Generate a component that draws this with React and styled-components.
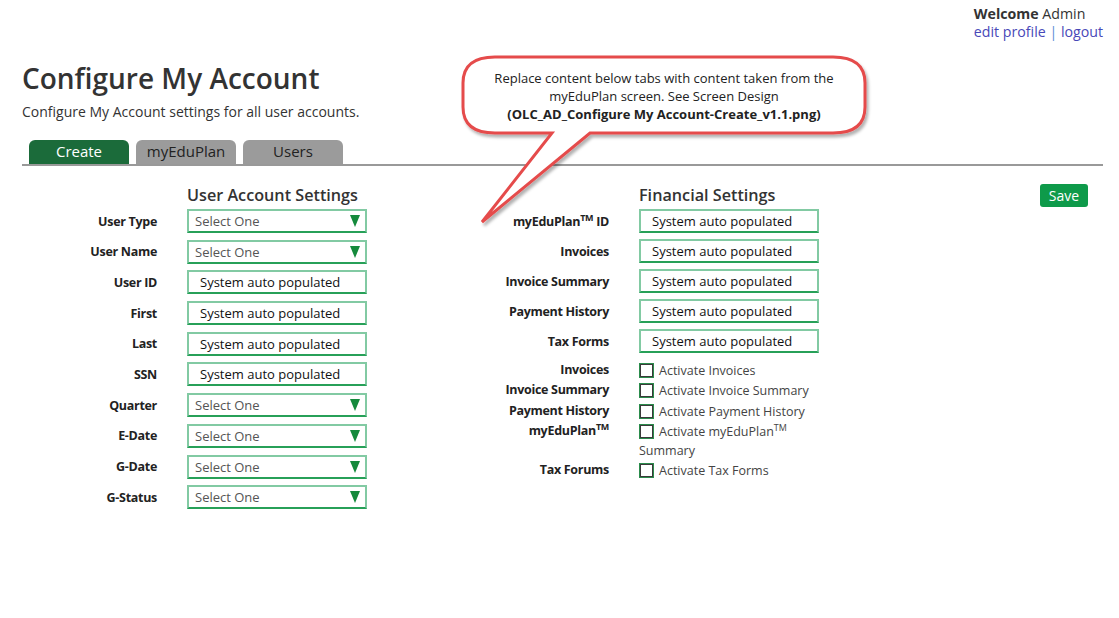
import React from 'react'
import styled, { createGlobalStyle } from 'styled-components'

const GlobalStyle = createGlobalStyle`
	html, body {
		margin: 0;
		padding: 0;
		background: #fff;
	}
	body {
		font-family: 'Open Sans', 'Liberation Sans', sans-serif;
		color: #333;
	}
`

const userRows = [
	{ label: 'User Type', select: true },
	{ label: 'User Name', select: true },
	{ label: 'User ID' },
	{ label: 'First' },
	{ label: 'Last' },
	{ label: 'SSN' },
	{ label: 'Quarter', select: true },
	{ label: 'E-Date', select: true },
	{ label: 'G-Date', select: true },
	{ label: 'G-Status', select: true },
]

const financeRows = [
	{ label: <>myEduPlan<sup>TM</sup> ID</> },
	{ label: 'Invoices' },
	{ label: 'Invoice Summary' },
	{ label: 'Payment History' },
	{ label: 'Tax Forms' },
]

const checkRows = [
	{ label: 'Invoices', text: 'Activate Invoices' },
	{ label: 'Invoice Summary', text: 'Activate Invoice Summary' },
	{ label: 'Payment History', text: 'Activate Payment History' },
	{ label: <>myEduPlan<sup>TM</sup></>, text: <>Activate myEduPlan<sup>TM</sup> Summary</> },
	{ label: 'Tax Forums', text: 'Activate Tax Forms' },
]

export default function App() {
	return (
		<Page>
			<GlobalStyle />
			<TopBar>
				<Welcome>
					<div><b>Welcome</b> Admin</div>
					<div>
						<Link href="#">edit profile</Link> <Pipe>|</Pipe> <Link href="#">logout</Link>
					</div>
				</Welcome>
			</TopBar>

			<Header>
				<Title>Configure My Account</Title>
				<Subtitle>Configure My Account settings for all user accounts.</Subtitle>
			</Header>

			<Tabs>
				<Tab active>Create</Tab>
				<Tab>myEduPlan</Tab>
				<Tab>Users</Tab>
			</Tabs>

			<FormArea>
				<Group labelWidth={135}>
					<Heading>User Account Settings</Heading>
					<Rows gap={6.7}>
						{userRows.map(r => (
							<Row key={r.label}>
								<Label>{r.label}</Label>
								{r.select ? (
									<Select>
										<span>Select One</span>
										<Arrow />
									</Select>
								) : (
									<Field>System auto populated</Field>
								)}
							</Row>
						))}
					</Rows>
				</Group>

				<Group labelWidth={150} style={{ marginLeft: 92 }}>
					<Heading>Financial Settings</Heading>
					<Rows gap={6}>
						{financeRows.map((r, i) => (
							<Row key={i}>
								<Label>{r.label}</Label>
								<Field>System auto populated</Field>
							</Row>
						))}
					</Rows>
					<Checks>
						{checkRows.map((r, i) => (
							<CheckRow key={i}>
								<Label>{r.label}</Label>
								<CheckText>
									<Box />
									{r.text}
								</CheckText>
							</CheckRow>
						))}
					</Checks>
				</Group>

				<SaveButton>Save</SaveButton>
			</FormArea>

			<Callout>
				<svg width="430" height="180" viewBox="0 0 430 180">
					<defs>
						<filter id="sh" x="-10%" y="-10%" width="120%" height="130%">
							<feDropShadow dx="2" dy="3" stdDeviation="1.5" floodColor="#000" floodOpacity="0.3" />
						</filter>
					</defs>
					<path
						d="M36 2 H374 Q406 2 406 28 V52 Q406 78 374 78 H131 L23 167 L93 78 H36 Q4 78 4 52 V28 Q4 2 36 2 Z"
						fill="#fff"
						stroke="#e54b4b"
						strokeWidth="3"
						strokeLinejoin="miter"
						filter="url(#sh)"
					/>
				</svg>
				<CalloutText>
					Replace content below tabs with content taken from the
					<br />
					myEduPlan screen. See Screen Design
					<br />
					<b>(OLC_AD_Configure My Account-Create_v1.1.png)</b>
				</CalloutText>
			</Callout>
		</Page>
	)
}

const Page = styled.div`
	position: relative;
	width: 1119px;
	height: 618px;
	overflow: hidden;
	padding: 0 16px 0 22px;
	box-sizing: border-box;
`

const TopBar = styled.div`
	display: flex;
	justify-content: flex-end;
	padding-top: 5px;
`

const Welcome = styled.div`
	font-size: 14.2px;
	line-height: 18px;
	color: #333;
	white-space: nowrap;
	b {
		font-weight: 700;
	}
`

const Link = styled.a`
	color: #4848b8;
	text-decoration: none;
`

const Pipe = styled.span`
	color: #5b8ad6;
`

const Header = styled.div`
	margin-top: 19px;
`

const Title = styled.h1`
	margin: 0;
	font-size: 28px;
	font-weight: 600;
	line-height: 36px;
	color: #333;
	letter-spacing: 0;
`

const Subtitle = styled.p`
	margin: 6px 0 0;
	font-size: 14px;
	line-height: 20px;
	color: #333;
`

const Tabs = styled.div`
	display: flex;
	gap: 7px;
	margin-top: 18px;
	padding-left: 7px;
	border-bottom: 2px solid #999;
`

const Tab = styled.div`
	width: 100px;
	height: 24px;
	line-height: 23px;
	text-align: center;
	font-size: 15px;
	border-radius: 6px 6px 0 0;
	background: ${p => (p.active ? '#1b6b3a' : '#9b9b9b')};
	color: ${p => (p.active ? '#fff' : '#222')};
`

const FormArea = styled.div`
	display: flex;
	align-items: flex-start;
	padding-top: 17px;
`

const Group = styled.div`
	display: grid;
	grid-template-columns: ${p => p.labelWidth}px 180px;
	column-gap: 30px;
`

const Heading = styled.h2`
	grid-column: 2;
	margin: 0 0 2px;
	font-size: 16.2px;
	font-weight: 600;
	line-height: 24px;
	color: #333;
	white-space: nowrap;
`

const Rows = styled.div`
	grid-column: 1 / span 2;
	display: grid;
	grid-template-columns: subgrid;
	row-gap: ${p => p.gap}px;
`

const Row = styled.div`
	grid-column: 1 / span 2;
	display: grid;
	grid-template-columns: subgrid;
	align-items: center;
`

const Label = styled.div`
	text-align: right;
	font-size: 12.5px;
	font-weight: 700;
	color: #222;
	white-space: nowrap;
	letter-spacing: -0.3px;
	sup {
		font-size: 9px;
		line-height: 0;
	}
`

const Field = styled.div`
	box-sizing: border-box;
	height: 24px;
	width: 180px;
	border: 2px solid #82caa3;
	border-bottom-color: #27a058;
	padding-left: 11px;
	font-size: 13px;
	line-height: 20px;
	color: #111;
	white-space: nowrap;
`

const Select = styled(Field)`
	display: flex;
	align-items: center;
	justify-content: space-between;
	padding: 0 5px 0 6px;
	color: #555;
`

const Arrow = styled.span`
	width: 0;
	height: 0;
	border-left: 5px solid transparent;
	border-right: 5px solid transparent;
	border-top: 12px solid #158a3c;
`

const Checks = styled.div`
	grid-column: 1 / span 2;
	display: grid;
	grid-template-columns: subgrid;
	margin-top: 8px;
	row-gap: 1px;
`

const CheckRow = styled.div`
	grid-column: 1 / span 2;
	display: grid;
	grid-template-columns: subgrid;
	align-items: start;
`

const CheckText = styled.div`
	font-size: 12.5px;
	line-height: 19.3px;
	color: #444;
	sup {
		font-size: 9px;
		line-height: 0;
	}
`

const Box = styled.span`
	display: inline-block;
	width: 11px;
	height: 11px;
	border: 1px solid #3a3a3a;
	outline: 1px solid #2b8c4c;
	margin: 0 6px 0 1px;
	vertical-align: -2px;
	background: #fff;
`

const SaveButton = styled.button`
	margin-left: auto;
	margin-right: 15px;
	margin-top: 1px;
	width: 48px;
	height: 23px;
	padding: 0;
	border: none;
	border-radius: 3px;
	background: #0e9a4a;
	color: #fff;
	font-family: inherit;
	font-size: 14px;
	line-height: 23px;
`

const Callout = styled.div`
	position: absolute;
	left: 459px;
	top: 55px;
	width: 430px;
	height: 180px;
	svg {
		position: absolute;
		left: 0;
		top: 0;
	}
`

const CalloutText = styled.div`
	position: relative;
	width: 410px;
	padding-top: 14px;
	text-align: center;
	font-size: 13px;
	line-height: 18px;
	color: #222;
	b {
		font-weight: 700;
	}
`
